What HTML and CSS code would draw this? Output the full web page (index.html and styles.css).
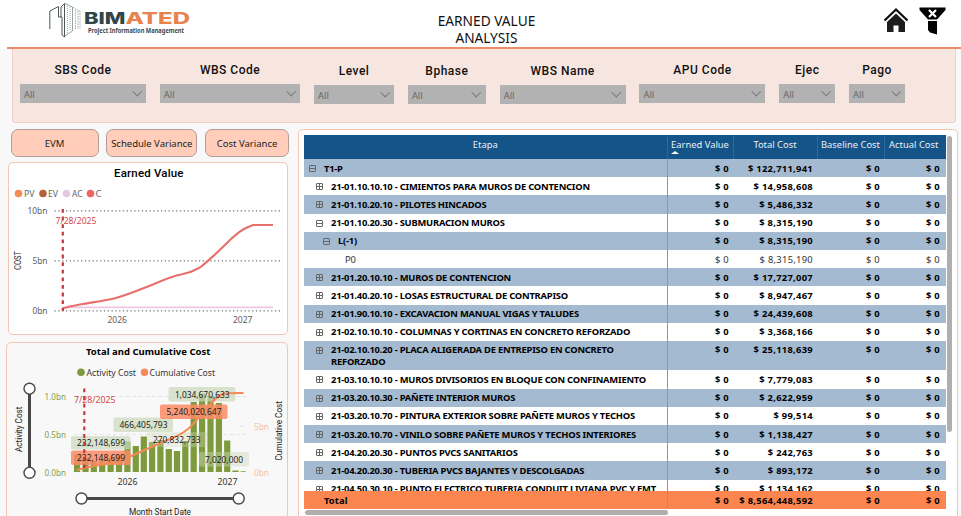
FILE: index.html
```
<!DOCTYPE html>
<html lang="en">
<head>
    <meta charset="UTF-8">
    <meta name="viewport" content="width=device-width, initial-scale=1.0">
    <title>Earned Value Analysis</title>
    <link rel="stylesheet" href="styles.css">
</head>
<body>
    <header class="header">
        <svg class="logo" width="145" height="42" viewBox="48 1 145 42" role="img" aria-label="Bimated">
            <g fill="none" stroke="#4c5959" stroke-width="1">
                <path d="M49.8 29V11L58.500 6.500V17M58.500 17H62V35M62 35L64.500 37V3.500L61 7V17"/>
                <path d="M65 3.500L72.500 7V31L65 36" stroke="#9aa3a3"/>
                <path d="M67.500 6V33M70 7V31" stroke="#a5adad" stroke-dasharray="1 1"/>
                <path d="M73 7.500L80 11V29M75.500 10V30M78 11V29" stroke="#a5adad" stroke-dasharray="1.500 1"/>
            </g>
            <text class="logo-name" x="84" y="23.800" textLength="41.500" lengthAdjust="spacingAndGlyphs" fill="#2f4548">BIM</text>
            <text class="logo-name" x="125.500" y="23.800" textLength="64.500" lengthAdjust="spacingAndGlyphs" fill="#e8834f">ATED</text>
            <text class="logo-sub" x="88" y="33" textLength="96" lengthAdjust="spacingAndGlyphs">Project Information Management</text>
        </svg>
        <h1 class="title">EARNED VALUE<br>ANALYSIS</h1>
        <div class="actions">
            <svg width="26" height="26" viewBox="0 0 26 26">
                <path d="M1.500 13.500L13 2.500L24.500 13.500" fill="none" stroke="#111" stroke-width="2.300"/>
                <path d="M4 15L13 6.500L22 15V25H15.500V18.500H10.500V25H4Z" fill="#1c1c1c"/>
            </svg>
            <svg width="27" height="28" viewBox="0 0 27 28">
                <path d="M.5.500H26.500V3L18 12.500H9L.5 3Z" fill="#000"/>
                <path d="M9 14H18V27.500L11 25.500L9 23Z" fill="#000"/>
                <path d="M10 3L17 10M17 3L10 10" stroke="#fff" stroke-width="2.200"/>
            </svg>
        </div>
    </header>

    <section class="filters">
        <div class="filter w126"><span>SBS Code</span><div class="select">All<i></i></div></div>
        <div class="filter w140"><span>WBS Code</span><div class="select">All<i></i></div></div>
        <div class="filter w80 low"><span>Level</span><div class="select">All<i></i></div></div>
        <div class="filter w78 low"><span>Bphase</span><div class="select">All<i></i></div></div>
        <div class="filter w126 low"><span>WBS Name</span><div class="select">All<i></i></div></div>
        <div class="filter w126"><span>APU Code</span><div class="select">All<i></i></div></div>
        <div class="filter w56"><span>Ejec</span><div class="select">All<i></i></div></div>
        <div class="filter w56"><span>Pago</span><div class="select">All<i></i></div></div>
    </section>

    <main class="main">
        <div class="left">
            <nav class="tabs">
                <button class="tab">EVM</button>
                <button class="tab wide">Schedule Variance</button>
                <button class="tab last">Cost Variance</button>
            </nav>

            <section class="card earned">
                <svg width="278" height="171" viewBox="9 163 278 171">
                    <text class="din" x="114" y="176.500" textLength="69.500">Earned Value</text>
                    <g class="legend">
                        <circle cx="18.500" cy="193.500" r="3.800" fill="#f58a58"/><text x="24" y="197.300" textLength="10.500" lengthAdjust="spacingAndGlyphs">PV</text>
                        <circle cx="43" cy="193.500" r="3.800" fill="#b3613f"/><text x="48" y="197.300" textLength="10" lengthAdjust="spacingAndGlyphs">EV</text>
                        <circle cx="66.500" cy="193.500" r="3.800" fill="#e3cae0"/><text x="72" y="197.300" textLength="10.500" lengthAdjust="spacingAndGlyphs">AC</text>
                        <circle cx="90.500" cy="193.500" r="3.800" fill="#f16462"/><text x="95.500" y="197.300">C</text>
                    </g>
                    <path class="dots" d="M54.500 210.800H280M54.500 260.800H280M54.500 310.800H280"/>
                    <g class="axis">
                        <text x="27.500" y="214.300" textLength="20" lengthAdjust="spacingAndGlyphs">10bn</text>
                        <text x="32.500" y="264.300" textLength="15" lengthAdjust="spacingAndGlyphs">5bn</text>
                        <text x="32.500" y="314.300" textLength="15" lengthAdjust="spacingAndGlyphs">0bn</text>
                        <text x="107.500" y="323" textLength="19.500" lengthAdjust="spacingAndGlyphs">2026</text>
                        <text x="233" y="323" textLength="19.500" lengthAdjust="spacingAndGlyphs">2027</text>
                        <text class="cost" transform="translate(21.300 270) rotate(-90)" textLength="19" lengthAdjust="spacingAndGlyphs">COST</text>
                    </g>
                    <path d="M63 307.300H273" fill="none" stroke="#ecc8e2" stroke-width="1.800"/>
                    <path class="cumulative" d="M63 308.500C70 306 76 305.300 83 304C96 301.800 106 300.500 116 298C130 294 141 289 153 284.500C163 280 173 276 183 274L191 271.800L200 267.500C212 258 222 248 231 239C237 233.500 241 230 247 227.500L253 225H273"/>
                    <path class="today" d="M62.800 209V311"/>
                    <text class="date" x="55.500" y="223.500" textLength="41" lengthAdjust="spacingAndGlyphs">7/28/2025</text>
                </svg>
            </section>

            <section class="card total">
                <svg width="280" height="173" viewBox="7 343 280 173">
                    <text class="total-title" x="86" y="355.300" textLength="124.500" lengthAdjust="spacingAndGlyphs">Total and Cumulative Cost</text>
                    <g class="legend dark">
                        <circle cx="81" cy="372.300" r="3.800" fill="#7d9a3c"/><text x="86.500" y="376" textLength="49.500" lengthAdjust="spacingAndGlyphs">Activity Cost</text>
                        <circle cx="144.500" cy="372.300" r="3.800" fill="#f58a58"/><text x="149.500" y="376" textLength="65.500" lengthAdjust="spacingAndGlyphs">Cumulative Cost</text>
                    </g>
                    <path d="M74 396.500H246M74 434.500H246M240 426H246" stroke="#e3e3e3" stroke-dasharray="3.500 3"/>
                    <g class="axis green">
                        <text x="44.500" y="399.800" textLength="21.500" lengthAdjust="spacingAndGlyphs">1.0bn</text>
                        <text x="44.500" y="437.500" textLength="21.500" lengthAdjust="spacingAndGlyphs">0.5bn</text>
                        <text x="44.500" y="475.500" textLength="21.500" lengthAdjust="spacingAndGlyphs">0.0bn</text>
                    </g>
                    <g class="axis peach">
                        <text x="254" y="429.500" textLength="15" lengthAdjust="spacingAndGlyphs">5bn</text>
                        <text x="254" y="475.500" textLength="15" lengthAdjust="spacingAndGlyphs">0bn</text>
                    </g>
                    <g class="axis dark">
                        <text x="117.500" y="484.500" textLength="20" lengthAdjust="spacingAndGlyphs">2026</text>
                        <text x="217.500" y="484.500" textLength="20" lengthAdjust="spacingAndGlyphs">2027</text>
                    </g>
                    <path fill="#7d9a3c" d="M74 454h6.200v18h-6.200zM82.400 458h6.200v14h-6.200zM90.700 461h6.200v11h-6.200zM99.100 459h6.200v13h-6.200zM107.500 458h6.200v14h-6.200zM115.900 455h6.200v17h-6.200zM124.300 441.500h6.200v30.500h-6.200zM132.700 446h6.200v26h-6.200zM140.700 436.500h6.200v35.500h-6.200zM149 442h6.200v30h-6.200zM157.300 440h6.200v32h-6.200zM165.700 449h6.200v23h-6.200zM173.900 451h6.200v21h-6.200zM182.200 441h6.200v31h-6.200zM190.600 402h6.200v70h-6.200zM199 393.500h6.200v78.500h-6.200zM207.400 396h6.200v76h-6.200zM215.800 403h6.200v69h-6.200zM224.100 440.500h6.200v31.500h-6.200zM232.400 470.600h6.200v1.400h-6.200zM240.700 471.200h5v.8h-5z"/>
                    <g class="labels">
                        <rect x="113.500" y="417.500" width="59.500" height="14.500" rx="2"/>
                        <rect x="71" y="436" width="59.500" height="13.500" rx="2"/>
                        <rect x="147" y="432" width="60" height="15" rx="2" fill-opacity=".35"/>
                        <rect x="168.500" y="387" width="67" height="14.500" rx="2"/>
                        <rect x="199" y="452" width="50" height="14.500" rx="2" fill-opacity=".45"/>
                        <rect class="hot" x="71" y="450.500" width="59.500" height="14.500" rx="2"/>
                        <rect class="hot" x="160" y="404.500" width="67.500" height="14.500" rx="2"/>
                    </g>
                    <path class="orange-line" d="M77 470C83 468 88 467 95 466L116 462L129 457L147 449L165 441C174 438 182 434 188 429C195 423 200 416 205 410C212 402 217 396 223 394C228 392.800 235 393 243.500 393"/>
                    <g class="labels">
                        <text x="119.500" y="428.300" textLength="48" lengthAdjust="spacingAndGlyphs">466,405,793</text>
                        <text x="77" y="446" textLength="48" lengthAdjust="spacingAndGlyphs">232,148,699</text>
                        <text x="77" y="461.300" textLength="48" lengthAdjust="spacingAndGlyphs">232,148,699</text>
                        <text x="153" y="443" textLength="47.500" lengthAdjust="spacingAndGlyphs">270,832,733</text>
                        <text x="175" y="398" textLength="54.500" lengthAdjust="spacingAndGlyphs">1,034,670,633</text>
                        <text x="166.500" y="415.300" textLength="55" lengthAdjust="spacingAndGlyphs">5,240,020,647</text>
                        <text x="205" y="463.300" textLength="38" lengthAdjust="spacingAndGlyphs">7,020,000</text>
                    </g>
                    <path class="today" d="M84.300 388.500V472"/>
                    <text class="date" x="74" y="402.800" textLength="41.500" lengthAdjust="spacingAndGlyphs">7/28/2025</text>
                    <g class="axis din-small">
                        <text transform="translate(22 452) rotate(-90)" textLength="45.500">Activity Cost</text>
                        <text transform="translate(281.500 460.500) rotate(-90)" textLength="59.500">Cumulative Cost</text>
                        <text x="129" y="514.800" textLength="62">Month Start Date</text>
                    </g>
                    <g class="slider">
                        <path d="M29.500 389V473M81.500 498.500H239"/>
                        <circle cx="29.500" cy="388.700" r="5.500"/><circle cx="29.500" cy="472.800" r="5.500"/>
                        <circle cx="81.500" cy="498.500" r="5.500"/><circle cx="238.700" cy="498.500" r="5.500"/>
                    </g>
                </svg>
            </section>
        </div>

        <section class="matrix">
            <div class="grid">
                <div class="row head"><span>Etapa</span><span class="sorted">Earned Value</span><span>Total Cost</span><span>Baseline Cost</span><span>Actual Cost</span></div>
                <div class="rows">
                    <div class="row top"><span><i class="box"></i>T1-P</span><span>$ 0</span><span>$ 122,711,941</span><span>$ 0</span><span>$ 0</span></div>
                    <div class="row"><span><i class="box plus"></i>21-01.10.10.10 - CIMIENTOS PARA MUROS DE CONTENCION</span><span>$ 0</span><span>$ 14,958,608</span><span>$ 0</span><span>$ 0</span></div>
                    <div class="row"><span><i class="box plus"></i>21-01.10.20.10 - PILOTES HINCADOS</span><span>$ 0</span><span>$ 5,486,332</span><span>$ 0</span><span>$ 0</span></div>
                    <div class="row"><span><i class="box"></i>21-01.10.20.30 - SUBMURACION MUROS</span><span>$ 0</span><span>$ 8,315,190</span><span>$ 0</span><span>$ 0</span></div>
                    <div class="row level"><span><i class="box"></i>L(-1)</span><span>$ 0</span><span>$ 8,315,190</span><span>$ 0</span><span>$ 0</span></div>
                    <div class="row leaf"><span>P0</span><span>$ 0</span><span>$ 8,315,190</span><span>$ 0</span><span>$ 0</span></div>
                    <div class="row"><span><i class="box plus"></i>21-01.20.10.10 - MUROS DE CONTENCION</span><span>$ 0</span><span>$ 17,727,007</span><span>$ 0</span><span>$ 0</span></div>
                    <div class="row"><span><i class="box plus"></i>21-01.40.20.10 - LOSAS ESTRUCTURAL DE CONTRAPISO</span><span>$ 0</span><span>$ 8,947,467</span><span>$ 0</span><span>$ 0</span></div>
                    <div class="row"><span><i class="box plus"></i>21-01.90.10.10 - EXCAVACION MANUAL VIGAS Y TALUDES</span><span>$ 0</span><span>$ 24,439,608</span><span>$ 0</span><span>$ 0</span></div>
                    <div class="row"><span><i class="box plus"></i>21-02.10.10.10 - COLUMNAS Y CORTINAS EN CONCRETO REFORZADO</span><span>$ 0</span><span>$ 3,368,166</span><span>$ 0</span><span>$ 0</span></div>
                    <div class="row tall"><span><i class="box plus"></i>21-02.10.10.20 - PLACA ALIGERADA DE ENTREPISO EN CONCRETO<br>REFORZADO</span><span>$ 0</span><span>$ 25,118,639</span><span>$ 0</span><span>$ 0</span></div>
                    <div class="row"><span><i class="box plus"></i>21-03.10.10.10 - MUROS DIVISORIOS EN BLOQUE CON CONFINAMIENTO</span><span>$ 0</span><span>$ 7,779,083</span><span>$ 0</span><span>$ 0</span></div>
                    <div class="row"><span><i class="box plus"></i>21-03.20.10.30 - PAÑETE INTERIOR MUROS</span><span>$ 0</span><span>$ 2,622,959</span><span>$ 0</span><span>$ 0</span></div>
                    <div class="row"><span><i class="box plus"></i>21-03.20.10.70 - PINTURA EXTERIOR SOBRE PAÑETE MUROS Y TECHOS</span><span>$ 0</span><span>$ 99,514</span><span>$ 0</span><span>$ 0</span></div>
                    <div class="row"><span><i class="box plus"></i>21-03.20.10.70 - VINILO SOBRE PAÑETE MUROS Y TECHOS INTERIORES</span><span>$ 0</span><span>$ 1,138,427</span><span>$ 0</span><span>$ 0</span></div>
                    <div class="row"><span><i class="box plus"></i>21-04.20.20.30 - PUNTOS PVCS SANITARIOS</span><span>$ 0</span><span>$ 242,763</span><span>$ 0</span><span>$ 0</span></div>
                    <div class="row"><span><i class="box plus"></i>21-04.20.20.30 - TUBERIA PVCS BAJANTES Y DESCOLGADAS</span><span>$ 0</span><span>$ 893,172</span><span>$ 0</span><span>$ 0</span></div>
                    <div class="row"><span><i class="box plus"></i>21-04.50.30.10 - PUNTO ELECTRICO TUBERIA CONDUIT LIVIANA PVC Y EMT</span><span>$ 0</span><span>$ 1,134,162</span><span>$ 0</span><span>$ 0</span></div>
                </div>
                <div class="row foot"><span>Total</span><span>$ 0</span><span>$ 8,564,448,592</span><span>$ 0</span><span>$ 0</span></div>
                <div class="hscroll"></div>
            </div>
            <div class="vscroll"></div>
        </section>
    </main>
</body>
</html>
```
FILE: styles.css
```
* {
    box-sizing: border-box;
}

body {
    margin: 0;
    width: 961px;
    height: 516px;
    overflow: hidden;
    background: #f9f8f8;
    font-family: "Noto Sans", "Open Sans", sans-serif;
    color: #111;
}

svg {
    display: block;
}

/* header */
.header {
    display: grid;
    grid-template-columns: 385px 200px 1fr;
    height: 49px;
    background: linear-gradient(#e98d68, #e98d68) 7px 46.5px / 954px 2.5px no-repeat, #fff;
}

.logo {
    margin: 1px 0 0 48px;
}

.logo-name {
    font: 800 15.5px Inter, sans-serif;
}

.logo-sub {
    font: bold 6.5px "Noto Sans", sans-serif;
    fill: #3b4a4c;
}

.title {
    margin: 11.5px 0 0 3px;
    font-size: 13.7px;
    line-height: 17.4px;
    font-weight: 400;
    text-align: center;
}

.actions {
    display: flex;
    justify-content: flex-end;
    gap: 10px;
    padding: 7px 15px 0 0;
}

/* slicers */
.filters {
    display: flex;
    gap: 13.8px;
    width: 944px;
    height: 74px;
    margin-left: 12px;
    padding: 13px 0 0 7px;
    background: #f7e6e0;
    border: 1px solid #f0cfc6;
    border-top: 0;
    border-radius: 0 0 4px 4px;
}

.filter {
    text-align: center;
    font: 500 12px/16px Roboto, sans-serif;
    letter-spacing: 0.5px;
}

.filter span {
    display: block;
}

.low {
    padding-top: 1px;
}

.w126 { width: 126px; }
.w140 { width: 140.5px; }
.w80 { width: 80px; }
.w78 { width: 78px; }
.w56 { width: 56px; }

.select {
    display: flex;
    justify-content: space-between;
    align-items: center;
    height: 18.5px;
    margin-top: 6px;
    padding: 2px 5px 0 4px;
    background: #b2b2b2;
    color: #666;
    font: 9.3px "Noto Sans", sans-serif;
    letter-spacing: 0;
}

.select i {
    width: 6.5px;
    height: 6.5px;
    margin: -6px 1px 0 0;
    border: solid #777;
    border-width: 0 1px 1px 0;
    transform: rotate(45deg);
}

/* layout under the slicers */
.main {
    display: flex;
    height: 393px;
}

.left {
    width: 298px;
    padding: 6px 0 0 6px;
}

.tabs {
    display: flex;
    gap: 7.8px;
    padding-left: 4.5px;
}

.tab {
    width: 88px;
    height: 28px;
    padding: 0;
    border: 1px solid #b09d98;
    border-radius: 7px;
    background: #ffcdb9;
    color: #222;
    font: 9.5px "Noto Sans", sans-serif;
}

.wide { width: 91px; }
.last { width: 84px; }

.card {
    border: 1px solid #f3c6b3;
    border-radius: 5px;
}

.earned {
    width: 280px;
    height: 173px;
    margin: 5px 0 0 2px;
    background: #fff;
}

.total {
    width: 282px;
    height: 180px;
    margin-top: 7px;
}

/* charts */
.din {
    font: 500 11.5px Roboto, sans-serif;
}

.total-title {
    font: bold 9.5px "Noto Sans", sans-serif;
}

.legend text {
    font-size: 9.5px;
    fill: #666;
}

.axis text {
    font-size: 9.3px;
    fill: #5c5c5c;
}

.legend.dark text,
.axis.dark text {
    fill: #333;
}

.axis.green text {
    fill: #83a04b;
}

.axis.peach text {
    fill: #f9bc9f;
}

.axis .cost,
.din-small text {
    font: 8.3px Roboto, sans-serif;
    fill: #222;
}

.dots {
    stroke: #777;
    stroke-width: 1.2;
    stroke-dasharray: 1.3 2.5;
}

.cumulative {
    fill: none;
    stroke: #e8706c;
    stroke-width: 2.2;
}

.orange-line {
    fill: none;
    stroke: #f58a58;
    stroke-width: 2;
}

.today {
    stroke: #c4373b;
    stroke-width: 2.2;
    stroke-dasharray: 3.8 3.8;
}

.date {
    font-size: 9.3px;
    fill: #d3484c;
}

.labels {
    fill: #ccd9bb;
    fill-opacity: 0.7;
}

.labels .hot {
    fill: #fb8b65;
    fill-opacity: 0.85;
}

.labels text {
    font-size: 9.5px;
    fill: #222;
    fill-opacity: 1;
}

.slider path {
    stroke: #484848;
    stroke-width: 3;
}

.slider circle {
    fill: #fff;
    stroke: #484848;
    stroke-width: 1.4;
}

/* matrix */
.matrix {
    display: flex;
    gap: 1px;
    width: 660px;
    height: 400px;
    margin-top: 6px;
    padding: 5px 0 0 5px;
    background: #fff;
    border: 1px solid #f3c6b3;
    border-radius: 5px;
}

.grid {
    width: 642px;
}

.row {
    display: grid;
    grid-template-columns: 363.5px 66px 84px 67px 61.5px;
    height: 18.2px;
    font-weight: 700;
    font-size: 9.4px;
    line-height: 11.7px;
    color: #000;
}

.row > span {
    padding: 3.6px 4.5px 0 0;
    text-align: right;
    white-space: nowrap;
    letter-spacing: 0.28px;
}

.row > span:last-child {
    padding-right: 6px;
}

.row > span:first-child {
    display: block;
    position: relative;
    padding-left: 27px;
    text-align: left;
    letter-spacing: -0.22px;
    border-right: 1px solid #5ba3e2;
}

.rows {
    height: 332px;
    overflow: hidden;
}

.rows .row:nth-child(odd) {
    background: #a3bad1;
}

.rows .tall {
    height: 29.5px;
}

.rows .top > span:first-child {
    padding-left: 20px;
}

.rows .level > span:first-child {
    padding-left: 34px;
}

.rows .leaf > span:first-child {
    padding-left: 41px;
}

.leaf {
    font-weight: 400;
    color: #333;
}

.row.head {
    height: 24px;
    background: #155489;
    color: #e8eff6;
    font-weight: 400;
}

.row.head > span,
.row.head > span:first-child {
    padding: 4px 0 0;
    text-align: center;
    letter-spacing: 0;
    border-right: 1px solid #2d699d;
}

.row.head > span:last-child {
    padding-right: 3px;
    border-right: 0;
}

.sorted::after {
    content: "";
    display: block;
    margin: 0 0 0 3px;
    width: 0;
    border: solid transparent;
    border-width: 0 4px 3.5px;
    border-bottom-color: #fff;
}

.row.foot {
    height: 18px;
    background: #fd8550;
}

.row.foot > span:first-child {
    padding-left: 20px;
    letter-spacing: 0.1px;
}

/* expand / collapse box, hangs in the indent before the label */
.box {
    position: absolute;
    top: 6px;
    margin-left: -15px;
    width: 7px;
    height: 7px;
    border: 1px solid #666;
    border-radius: 1px;
    background: linear-gradient(#666, #666) center / 5px 1px no-repeat;
}

.plus {
    background: linear-gradient(#666, #666) center / 5px 1px no-repeat, linear-gradient(#666, #666) center / 1px 5px no-repeat;
}

.hscroll {
    width: 363px;
    height: 5px;
    margin: 1px 0 0 1px;
    border-radius: 3px;
    background: #b0aeae;
}

.vscroll {
    width: 5px;
    height: 296px;
    margin-top: 1px;
    border-radius: 3px;
    background: #b0aeae;
}
```
